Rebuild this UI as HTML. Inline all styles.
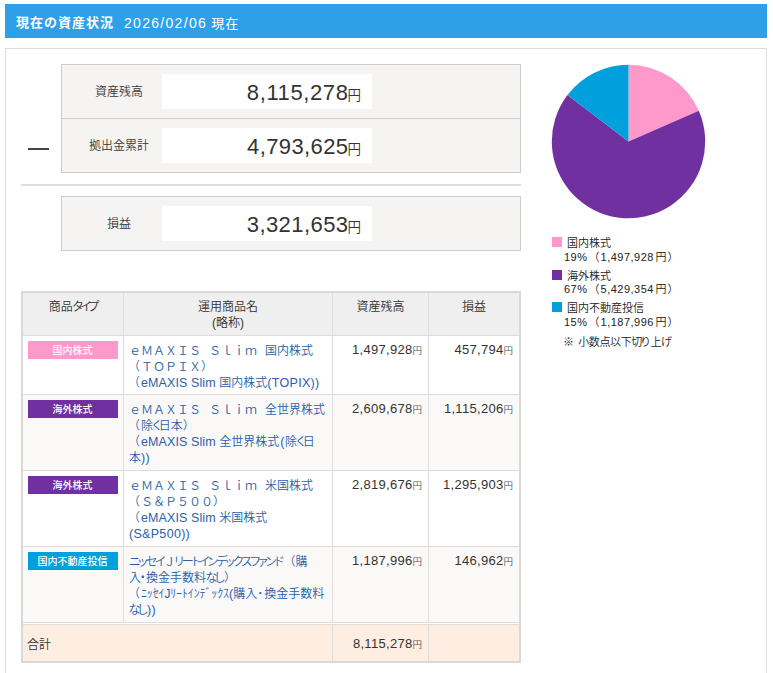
<!DOCTYPE html>
<html lang="ja">
<head>
<meta charset="utf-8">
<title>現在の資産状況</title>
<style>
*{box-sizing:border-box;margin:0;padding:0}
html,body{width:773px;height:673px;overflow:hidden;background:#fff}
body{position:relative;font-family:"Liberation Sans","Noto Sans CJK JP DemiLight","Noto Sans CJK JP",sans-serif;color:#333;font-size:12px;line-height:16px}
.abs{position:absolute}
#bar{left:5px;top:4px;width:762px;height:34px;background:#2ea0ea;color:#fff;font-size:13px;line-height:34px;white-space:nowrap}
#bar b{font-family:"Liberation Sans","Noto Sans CJK JP",sans-serif;position:absolute;left:11px;top:2px;font-weight:bold;letter-spacing:1px}
#bar .d{font-family:"Liberation Sans","Noto Sans CJK JP",sans-serif;position:absolute;left:119px;top:2px;font-size:14px;letter-spacing:1.3px}
#bar .d i{font-style:normal;font-size:13px;letter-spacing:1px;margin-left:-1px}
#panel{left:5px;top:48px;width:762px;height:700px;border:1px solid #ddd;background:#fff}
.sum{left:61px;width:460px;border:1px solid #ccc;background:#f5f4f2}
.sum .r{position:relative;height:53px}
.sum .r + .r{border-top:1px solid #ccc;height:54px}
.sum .l{position:absolute;left:0;top:1px;width:114px;height:53px;line-height:53px;text-align:center;font-size:12px;color:#3a3a3a}
.sum .v{position:absolute;left:100px;top:9px;width:210px;height:35px;background:#fff;text-align:right;padding-right:11px;line-height:37px;font-size:22px;letter-spacing:.6px;white-space:nowrap;color:#333}
.sum .v i{font-style:normal;font-size:13.5px;letter-spacing:0;margin-left:-1px}
#minus{left:28px;top:148px;width:21px;height:2px;background:#444}
#hr{left:21px;top:184px;width:500px;height:2px;background:#ddd}
#pie{left:551px;top:64px;width:155px;height:155px}
.sq{width:10px;height:10px;left:552px}
.lt{left:567px;font-size:11px;line-height:15px;white-space:nowrap;color:#222}
.ls{left:564px;font-size:11px;line-height:15px;white-space:nowrap;color:#222}
.ls .n{font-size:11px;letter-spacing:.5px}
.ls .p1{margin:0 1px 0 1px}
.ls .y{margin-left:1.5px}
.ls .p2{margin-left:1px}
table{border-collapse:separate;border-spacing:0}
#tbl{left:21px;top:291px;width:500px;height:372px;border:2px solid #d9d9d9;background:#fff}
#tbl .row{position:absolute;left:0;width:496px;border-top:1px solid #ddd}
#tbl .c{position:absolute;top:0;bottom:0}
#tbl .c1{left:0;width:100px}
#tbl .c2{left:100px;width:209px;border-left:1px solid #ddd;padding:7px 0 0 5px;color:#2b5fa8;white-space:nowrap}
#tbl .c3{left:309px;width:96px;border-left:1px solid #ddd;padding:6px 6px 0 0;text-align:right}
#tbl .c4{left:405px;width:91px;border-left:1px solid #ddd;padding:6px 6px 0 0;text-align:right}
#tbl .hd{background:#efefef;text-align:center;border-top:0}
#tbl .hd .c{padding:6px 0 0 0;text-align:center;color:#333}
#tbl .num{font-size:13px;letter-spacing:.3px}
#tbl .yen{font-size:9.5px;color:#555}
.bdg{font-family:"Liberation Sans","Noto Sans CJK JP",sans-serif;position:absolute;left:5px;top:5px;width:90px;height:18px;line-height:20px;overflow:hidden;text-align:center;padding-right:1px;color:#fff;font-size:10px;font-weight:500}
.pk{background:#ff99cc}.pp{background:#7030a0}.bl{background:#00a0dc}
.alt{background:#faf9f8}
.k{font-feature-settings:"palt";letter-spacing:-2px}
.hk{letter-spacing:-.15px}
#h1{position:relative;left:-.5px}
.dot{margin:0 -2.75px 0 -4.25px}
.k3{font-feature-settings:"palt";letter-spacing:-2.7px;margin-left:-.5px;margin-right:2px}
.hd2{margin-right:1px}
.sp{letter-spacing:-4px}
.op{margin-left:-1px;margin-right:1px}
.op2{margin-left:-1px;margin-right:1px}
.la2{font-size:12.5px;letter-spacing:.3px}
.la{font-size:12.5px;letter-spacing:.1px}
.ku{font-feature-settings:"palt";letter-spacing:-2px;margin-left:-.5px}
.cp{margin-left:0}
</style>
</head>
<body>
<div id="bar" class="abs"><b>現在の資産状況</b><span class="d">2026/02/06 <i>現在</i></span></div>
<div id="panel" class="abs"></div>

<div class="abs sum" style="top:64px">
  <div class="r"><div class="l">資産残高</div><div class="v">8,115,278<i>円</i></div></div>
  <div class="r"><div class="l">拠出金累計</div><div class="v" style="letter-spacing:.4px">4,793,625<i>円</i></div></div>
</div>
<div id="minus" class="abs"></div>
<div id="hr" class="abs"></div>
<div class="abs sum" style="top:196px">
  <div class="r"><div class="l">損益</div><div class="v" style="letter-spacing:.43px">3,321,653<i>円</i></div></div>
</div>

<svg id="pie" class="abs" viewBox="0 0 155 155">
  <path d="M77.5 77.5 L77.50 0.80 A76.7 76.7 0 0 1 147.81 46.85 Z" fill="#ff99cc"/>
  <path d="M77.5 77.5 L147.81 46.85 A76.7 76.7 0 1 1 16.49 31.02 Z" fill="#7030a0"/>
  <path d="M77.5 77.5 L16.49 31.02 A76.7 76.7 0 0 1 77.50 0.80 Z" fill="#00a0dc"/>
</svg>

<div class="abs sq pk" style="top:237px"></div>
<div class="abs lt" id="lt1" style="top:236px">国内株式</div>
<div class="abs ls" id="ls1" style="top:250px"><span class="n">19%</span><span class="p1">（</span><span class="n">1,497,928</span><span class="y">円</span><span class="p2">）</span></div>
<div class="abs sq pp" style="top:270px"></div>
<div class="abs lt" id="lt2" style="top:269px">海外株式</div>
<div class="abs ls" id="ls2" style="top:282px"><span class="n">67%</span><span class="p1">（</span><span class="n">5,429,354</span><span class="y">円</span><span class="p2">）</span></div>
<div class="abs sq bl" style="top:302px"></div>
<div class="abs lt" id="lt3" style="top:301px">国内不動産投信</div>
<div class="abs ls" id="ls3" style="top:315px"><span class="n">15%</span><span class="p1">（</span><span class="n">1,187,996</span><span class="y">円</span><span class="p2">）</span></div>
<div class="abs ls" id="ln" style="top:335px;left:563px;letter-spacing:-.4px">※ <span style="margin-left:2px">小数点以下切</span><span style="margin-left:-2px">り上げ</span></div>

<div id="tbl" class="abs">
  <div class="row hd" style="top:0;height:42px">
    <div class="c c1"><span id="h1">商品<span class="k" style="letter-spacing:-2.8px">タイプ</span></span></div>
    <div class="c c2">運用商品名<br>(略称)</div>
    <div class="c c3">資産残高</div>
    <div class="c c4">損益</div>
  </div>
  <div class="row" style="top:42px;height:59px">
    <div class="c c1"><span class="bdg pk">国内株式</span></div>
    <div class="c c2">ｅＭＡＸＩＳ<span class="sp">　</span>Ｓｌｉｍ<span class="sp">　</span>国内株式<br><span class="op">（</span>ＴＯＰＩＸ）<br><span class="op2">（</span><span class="la">eMAXIS Slim </span>国内株式<span class="la2">(TOPIX))</span></div>
    <div class="c c3"><span class="num">1,497,928</span><span class="yen">円</span></div>
    <div class="c c4"><span class="num">457,794</span><span class="yen">円</span></div>
  </div>
  <div class="row alt" style="top:101px;height:76px">
    <div class="c c1"><span class="bdg pp">海外株式</span></div>
    <div class="c c2">ｅＭＡＸＩＳ<span class="sp">　</span>Ｓｌｉｍ<span class="sp">　</span>全世界株式<br><span class="op">（</span>除<span class="ku">く</span>日本<span class="cp">）</span><br><span class="op2">（</span><span class="la">eMAXIS Slim </span>全世界株式<span class="la" style="margin:0 .7px 0 .8px">(</span>除<span class="ku">く</span>日<br>本<span class="la2">))</span></div>
    <div class="c c3"><span class="num">2,609,678</span><span class="yen">円</span></div>
    <div class="c c4"><span class="num">1,115,206</span><span class="yen">円</span></div>
  </div>
  <div class="row" style="top:177px;height:76px">
    <div class="c c1"><span class="bdg pp">海外株式</span></div>
    <div class="c c2">ｅＭＡＸＩＳ<span class="sp">　</span>Ｓｌｉｍ<span class="sp">　</span>米国株式<br><span class="op">（</span>Ｓ＆Ｐ５００）<br><span class="op2">（</span><span class="la">eMAXIS Slim </span>米国株式<br><span class="la2">(S&amp;P500))</span></div>
    <div class="c c3"><span class="num">2,819,676</span><span class="yen">円</span></div>
    <div class="c c4"><span class="num">1,295,903</span><span class="yen">円</span></div>
  </div>
  <div class="row alt" style="top:253px;height:76px">
    <div class="c c1"><span class="bdg bl">国内不動産投信</span></div>
    <div class="c c2"><span class="k" id="k1">ニッセイ</span><span id="fj">Ｊ</span><span class="k" id="k2" style="margin-left:-1.5px;margin-right:1.5px">リートインデックスファンド</span><span id="p4">（</span>購<br>入<span class="dot">・</span>換金手数料<span class="k3">なし</span><span id="p5">）</span><br><span class="op2">（</span><span class="hk">ﾆｯｾｲJﾘｰﾄｲﾝﾃﾞｯｸｽ</span><span class="la" id="p6">(</span>購入<span class="hd2">･</span>換金手数料<br><span class="k3">なし</span><span class="la2">))</span></div>
    <div class="c c3"><span class="num">1,187,996</span><span class="yen">円</span></div>
    <div class="c c4"><span class="num">146,962</span><span class="yen">円</span></div>
  </div>
  <div class="row" style="top:329px;height:3px;border-top:1px solid #ddd;border-bottom:1px solid #ddd;background:#fff"></div>
  <div class="row tot" style="top:332px;height:36px;border-top:0;background:#fdeee1">
    <div class="c c1" style="padding:12px 0 0 4px">合計</div>
    <div class="c c3" style="padding-top:11px"><span class="num">8,115,278</span><span class="yen">円</span></div>
    <div class="c c4"></div>
  </div>
</div>
</body>
</html>
